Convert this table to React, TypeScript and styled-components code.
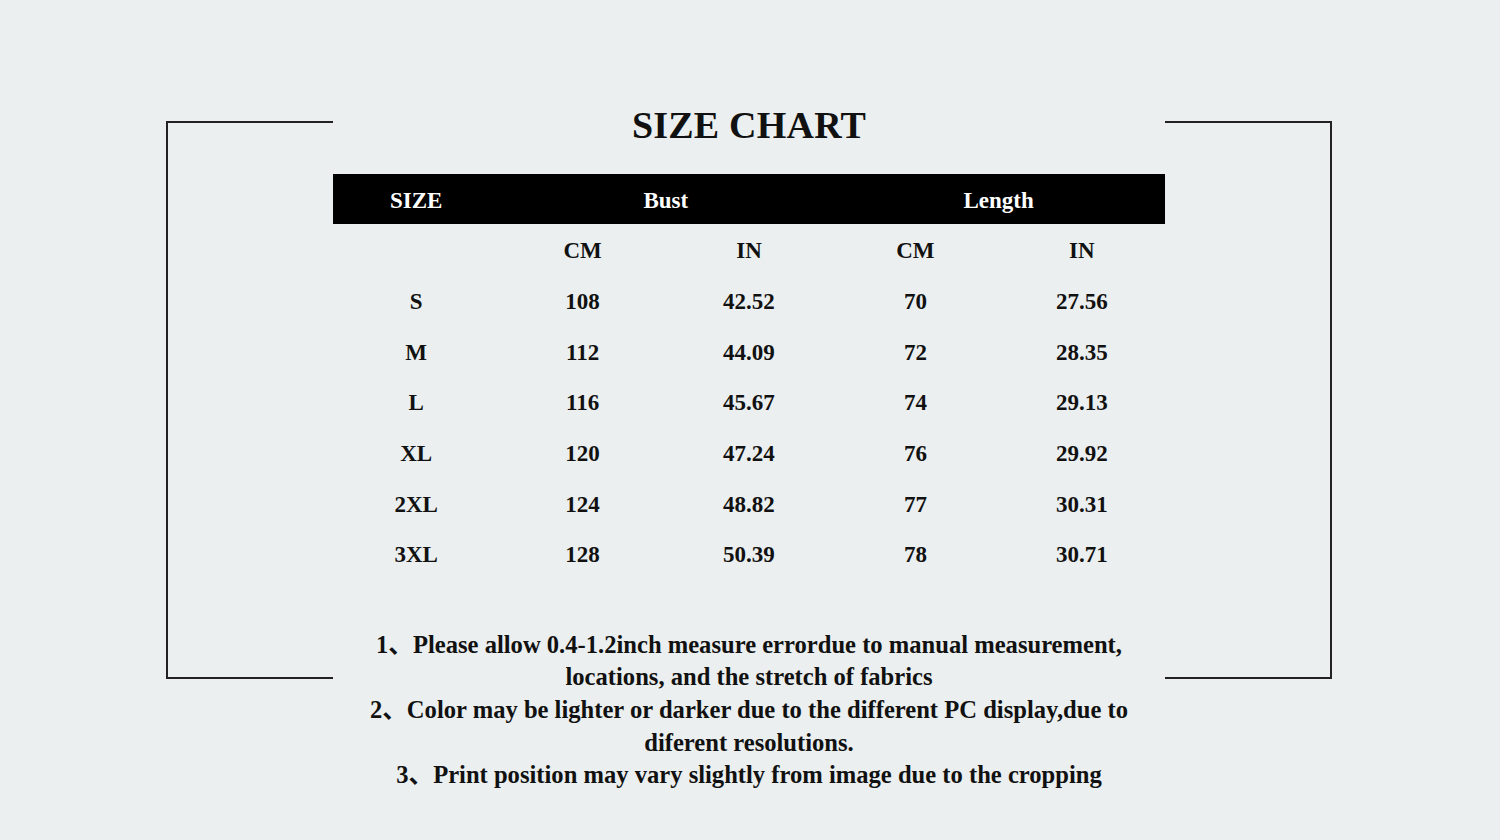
import React from 'react';
import styled, { createGlobalStyle } from 'styled-components';

const GlobalStyle = createGlobalStyle`
  html, body {
    margin: 0;
    padding: 0;
    background: #ebefef;
  }
  body {
    font-family: "Liberation Serif", "Times New Roman", "Noto Sans CJK SC", serif;
    color: #111;
  }
`;

const Page = styled.div`
  width: 1500px;
  height: 840px;
  box-sizing: border-box;
  padding: 99px 0 0 166px;
  background: #ebefef;
  overflow: hidden;
`;

const Layout = styled.div`
  display: grid;
  grid-template-columns: 167px 832px 167px;
  justify-content: start;
  align-items: start;
`;

const Bracket = styled.div<{ $side: 'left' | 'right' }>`
  margin-top: 22px;
  height: 558px;
  box-sizing: border-box;
  border-top: 2px solid #222;
  border-bottom: 2px solid #222;
  ${({ $side }) => ($side === 'left' ? 'border-left: 2px solid #222;' : 'border-right: 2px solid #222;')}
`;

const Content = styled.div`
  display: flex;
  flex-direction: column;
  align-items: stretch;
`;

const Title = styled.h1`
  margin: 1px 0 24px;
  height: 50px;
  line-height: 50px;
  text-align: center;
  font-size: 38px;
  font-weight: 700;
  letter-spacing: 0.2px;
`;

const Row = styled.div<{ $dark?: boolean }>`
  display: grid;
  grid-template-columns: repeat(5, 1fr);
  align-items: center;
  height: ${({ $dark }) => ($dark ? '50px' : '50.7px')};
  background: ${({ $dark }) => ($dark ? '#000' : 'transparent')};
  color: ${({ $dark }) => ($dark ? '#fff' : '#111')};
`;

const Cell = styled.div<{ $span?: number }>`
  grid-column: span ${({ $span }) => $span ?? 1};
  padding-top: 4px;
  text-align: center;
  font-size: 23px;
  font-weight: 700;
`;

const Notes = styled.div`
  margin-top: 50px;
  display: flex;
  flex-direction: column;
  align-items: center;
  text-align: center;
  white-space: nowrap;
`;

const NoteLine = styled.div`
  height: 32.6px;
  line-height: 32.6px;
  font-size: 24.6px;
  font-weight: 700;
`;

const rows = [
  ['S', '108', '42.52', '70', '27.56'],
  ['M', '112', '44.09', '72', '28.35'],
  ['L', '116', '45.67', '74', '29.13'],
  ['XL', '120', '47.24', '76', '29.92'],
  ['2XL', '124', '48.82', '77', '30.31'],
  ['3XL', '128', '50.39', '78', '30.71'],
];

const notes = [
  '1、Please allow 0.4-1.2inch measure errordue to manual measurement,',
  'locations, and the stretch of fabrics',
  '2、Color may be lighter or darker due to the different PC display,due to',
  'diferent resolutions.',
  '3、Print position may vary slightly from image due to the cropping',
];

const App: React.FC = () => {
  return (
    <Page>
      <GlobalStyle />
      <Layout>
        <Bracket $side="left" />
        <Content>
          <Title>SIZE CHART</Title>
          <Row $dark>
            <Cell>SIZE</Cell>
            <Cell $span={2}>Bust</Cell>
            <Cell $span={2}>Length</Cell>
          </Row>
          <Row>
            <Cell />
            <Cell>CM</Cell>
            <Cell>IN</Cell>
            <Cell>CM</Cell>
            <Cell>IN</Cell>
          </Row>
          {rows.map((r) => (
            <Row key={r[0]}>
              {r.map((v, i) => (
                <Cell key={i}>{v}</Cell>
              ))}
            </Row>
          ))}
          <Notes>
            {notes.map((n) => (
              <NoteLine key={n}>{n}</NoteLine>
            ))}
          </Notes>
        </Content>
        <Bracket $side="right" />
      </Layout>
    </Page>
  );
};

export default App;
